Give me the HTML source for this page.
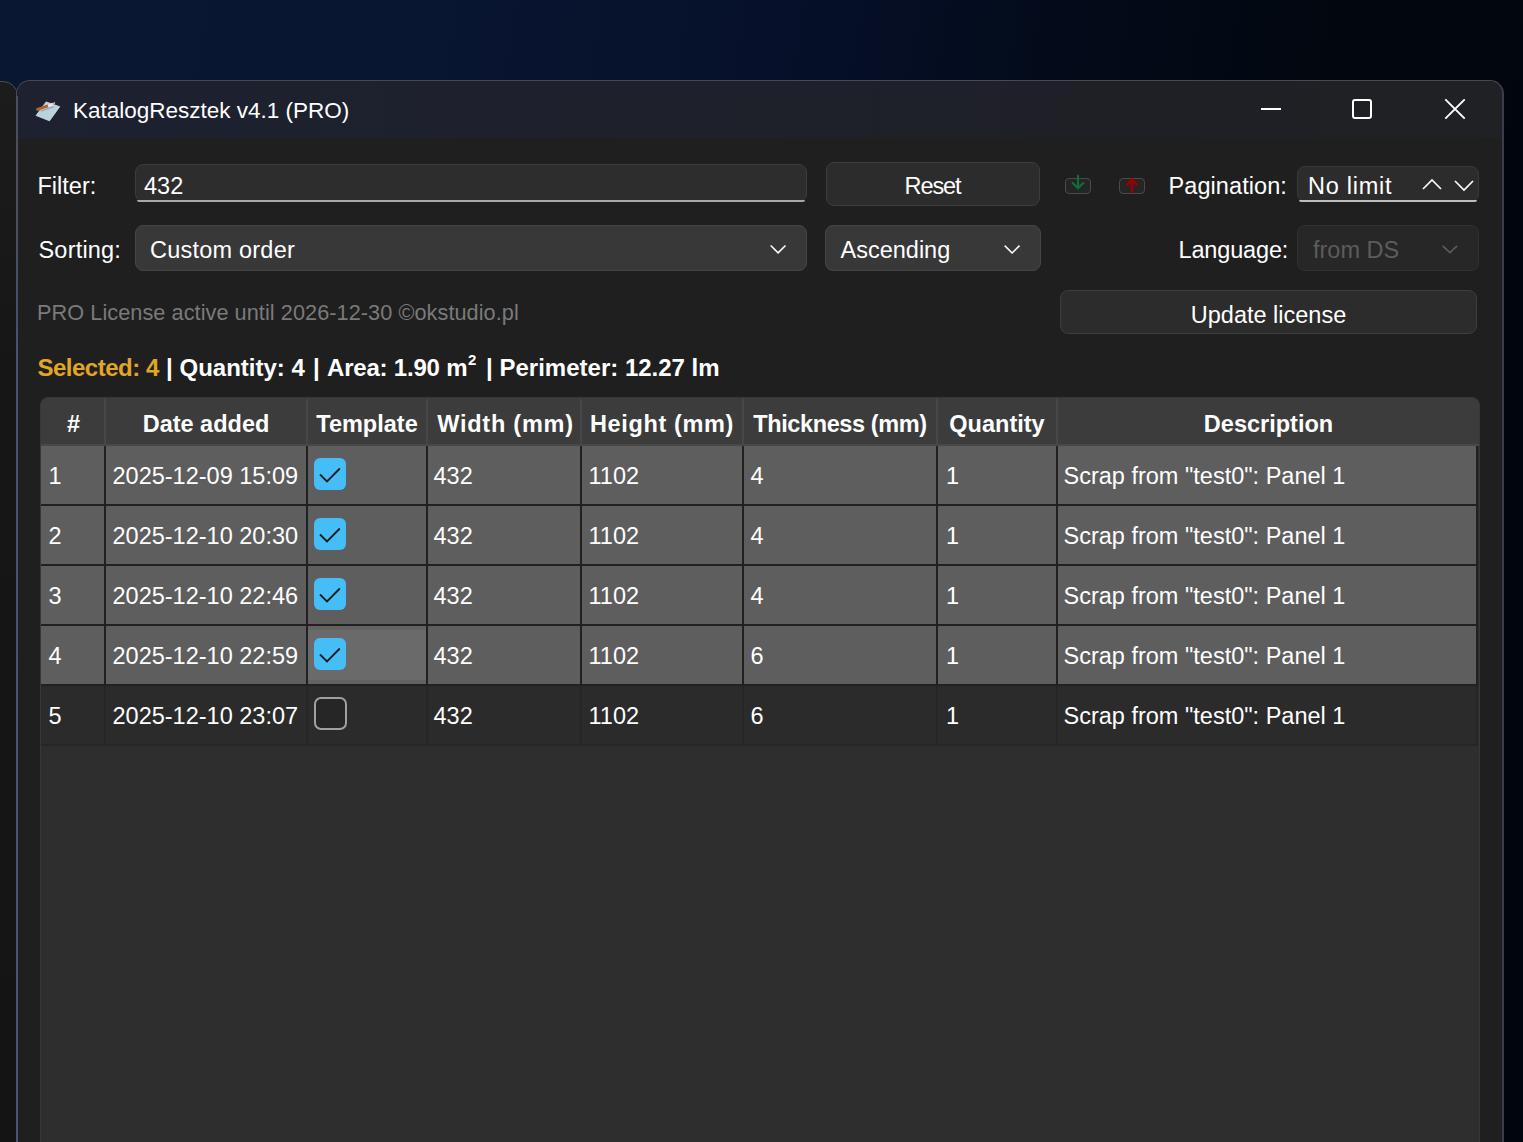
<!DOCTYPE html>
<html><head><meta charset="utf-8">
<style>
*{margin:0;padding:0;box-sizing:border-box}
html,body{width:1523px;height:1142px;overflow:hidden}
body{position:relative;font-family:"Liberation Sans",sans-serif;color:#fff;
background:linear-gradient(100deg,#0a1733 0%,#091631 25%,#06102a 45%,#030b1a 62%,#02070f 78%,#01050c 100%);}
.a{position:absolute}
.t{position:absolute;white-space:nowrap;font-size:23.5px;line-height:28px}
.b{font-weight:bold}
#left{left:-20px;top:81px;width:37.5px;height:1100px;background:linear-gradient(#1c1c1c,#161616 300px,#141414);border:1.5px solid #4a4f58;border-radius:15px}
#win{left:16px;top:80px;width:1488px;height:1100px;border:1.5px solid #444955;border-right:2px solid #3a3e4a;border-radius:14px;background:#1f1f1f;overflow:hidden}
#title{left:0;top:0;width:100%;height:56.5px;background:linear-gradient(90deg,#1d2130 0%,#1e212c 40%,#1f2026 75%,#202124 100%)}
.box{position:absolute;border-radius:8px}
.chev{position:absolute}
.grid{position:absolute}
</style></head><body>
<div id="left" class="a"></div>
<div id="win" class="a">
  <div id="title" class="a"></div>
</div>
<div class="a" style="left:16px;top:96px;width:1.6px;height:1046px;background:linear-gradient(#4a4f58 0px,#4a4f5c 124px,#485075 264px,#4a527c 604px,#4a527c)"></div>

<!-- title content -->
<svg class="a" style="left:32px;top:98px" width="32" height="26" viewBox="0 0 32 26">
  <polygon points="4.1,17.5 14.1,3.9 27.7,8.7 17.5,22.8" fill="#bad2de" stroke="#cde3ee" stroke-width="0.8" stroke-linejoin="round"/>
  <line x1="8.7" y1="13.2" x2="21.9" y2="8.6" stroke="#98a6b0" stroke-width="1.3"/>
  <line x1="5.4" y1="11.3" x2="16" y2="7.9" stroke="#b3622c" stroke-width="2.8" stroke-linecap="round"/>
  <line x1="16" y1="7.9" x2="21.3" y2="6.1" stroke="#e8e8ee" stroke-width="2.6"/>
  <line x1="21.3" y1="6.1" x2="22.3" y2="5" stroke="#c9bb9f" stroke-width="1.8" stroke-linecap="round"/>
</svg>
<div class="t" style="left:73px;top:97px;font-size:22.5px">KatalogResztek v4.1 (PRO)</div>
<!-- window controls -->
<div class="a" style="left:1261px;top:108px;width:20px;height:2px;background:#fff"></div>
<div class="a" style="left:1352px;top:99px;width:20px;height:20px;border:2px solid #fff;border-radius:3px"></div>
<svg class="a" style="left:1443px;top:97px" width="24" height="24" viewBox="0 0 24 24"><path d="M2.3 2.3L21.7 21.7M21.7 2.3L2.3 21.7" stroke="#fff" stroke-width="1.9"/></svg>

<!-- row 1 -->
<div class="t" style="left:37.5px;top:172px">Filter:</div>
<div class="box" style="left:135px;top:164px;width:672px;height:38px;background:#2d2d2d;border:1px solid #3c3c3c"></div>
<div class="a" style="left:137px;top:200px;width:668px;height:2px;border-radius:0 0 6px 6px;background:#a8a8a8"></div>
<div class="t" style="left:144px;top:172px">432</div>
<div class="box" style="left:826px;top:162px;width:214px;height:44px;background:#2c2c2c;border:1px solid #3d3d3d"></div>
<div class="t" style="left:825.5px;top:172px;width:214px;text-align:center;letter-spacing:-1.1px">Reset</div>

<!-- import/export icons -->
<div class="a" style="left:1065px;top:178px;width:26px;height:16px;border:1.8px solid #4a4a4a;background:#252525;border-radius:4px"></div>
<svg class="a" style="left:1070px;top:174px" width="16" height="16" viewBox="0 0 16 16"><path d="M8 1.5V14M2.7 9L8 14.3L13.3 9" stroke="#0e6e3b" stroke-width="2.2" stroke-linecap="round" fill="none"/></svg>
<div class="a" style="left:1119px;top:178px;width:26px;height:16px;border:1.8px solid #4a4a4a;background:#252525;border-radius:4px"></div>
<svg class="a" style="left:1124px;top:177px" width="16" height="17" viewBox="0 0 16 17"><path d="M8 15.3V3M2.9 7.8L8 2.6L13.1 7.8" stroke="#990000" stroke-width="2.6" stroke-linecap="round" fill="none"/></svg>

<div class="t" style="left:1168.5px;top:172px;letter-spacing:0.08px">Pagination:</div>
<div class="box" style="left:1297px;top:166px;width:182px;height:36px;background:#2c2c2c;border:1px solid #393939"></div>
<div class="a" style="left:1299px;top:200px;width:178px;height:2px;border-radius:0 0 6px 6px;background:#bdbdbd"></div>
<div class="t" style="left:1308px;top:172px;letter-spacing:0.75px">No limit</div>
<svg class="a" style="left:1422px;top:178px" width="20" height="13" viewBox="0 0 20 13"><path d="M1 11L10 2L19 11" stroke="#fff" stroke-width="1.6" fill="none"/></svg>
<svg class="a" style="left:1454px;top:179px" width="20" height="13" viewBox="0 0 20 13"><path d="M1 2L10 11L19 2" stroke="#fff" stroke-width="1.6" fill="none"/></svg>

<!-- row 2 -->
<div class="t" style="left:38.5px;top:236px;letter-spacing:0.2px">Sorting:</div>
<div class="box" style="left:135px;top:225px;width:672px;height:46px;background:#383838;border:1px solid #454545"></div>
<div class="t" style="left:150px;top:236px;letter-spacing:0.22px">Custom order</div>
<svg class="a" style="left:769px;top:243px" width="19" height="13" viewBox="0 0 19 13"><path d="M1.7 2.5L9.1 9.9L16.5 2.5" stroke="#fff" stroke-width="1.55" fill="none"/></svg>
<div class="box" style="left:825px;top:225px;width:216px;height:46px;background:#383838;border:1px solid #454545"></div>
<div class="t" style="left:840.5px;top:236px">Ascending</div>
<svg class="a" style="left:1003px;top:243px" width="19" height="13" viewBox="0 0 19 13"><path d="M1.7 2.6L9.1 10L16.5 2.6" stroke="#fff" stroke-width="1.55" fill="none"/></svg>

<div class="t" style="left:1178.5px;top:236px;letter-spacing:-0.15px">Language:</div>
<div class="box" style="left:1297px;top:225px;width:182px;height:46px;background:#272727;border:1px solid #313131"></div>
<div class="t" style="left:1313px;top:236px;color:#5c5c5c">from DS</div>
<svg class="a" style="left:1441px;top:243px" width="18" height="12" viewBox="0 0 18 12"><path d="M1.7 2.9L8.9 9.6L16.1 2.9" stroke="#5c5c5c" stroke-width="1.6" fill="none"/></svg>

<!-- row 3 -->
<div class="t" style="left:37px;top:299px;font-size:21.7px;color:#7a7a7a;letter-spacing:0.06px">PRO License active until 2026-12-30 ©okstudio.pl</div>
<div class="box" style="left:1060px;top:290px;width:417px;height:44px;background:#2c2c2c;border:1px solid #3d3d3d"></div>
<div class="t" style="left:1060px;top:301px;width:417px;text-align:center">Update license</div>

<!-- stats -->
<div class="t b" style="left:37.5px;top:354px;font-size:24px;color:#e0a628;letter-spacing:-0.5px">Selected: 4</div>
<div class="t b" style="left:166px;top:354px;font-size:24px">|</div>
<div class="t b" style="left:179.5px;top:354px;font-size:24px">Quantity: 4</div>
<div class="t b" style="left:313px;top:354px;font-size:24px">|</div>
<div class="t b" style="left:327px;top:354px;font-size:24px;letter-spacing:-0.2px">Area: 1.90 m</div>
<div class="t b" style="left:468px;top:346px;font-size:15px;font-weight:bold">2</div>
<div class="t b" style="left:486px;top:354px;font-size:24px">|</div>
<div class="t b" style="left:499.5px;top:354px;font-size:24px;letter-spacing:0px">Perimeter: 12.27 lm</div>

<!-- grid -->
<div class="grid" style="left:40px;top:397px;width:1440px;height:760px;background:#2e2e2e;border:1px solid #383838;border-radius:8px;overflow:hidden" id="grid"></div>
<div id="cells">
<div class="a" style="left:41px;top:398px;width:1438px;height:47px;background:#3c3c3c;border-radius:7px 7px 0 0"></div>
<div class="a" style="left:41px;top:444px;width:1438px;height:2px;background:#484848"></div>
<div class="a" style="left:104px;top:399px;width:2px;height:45px;background:#474747"></div>
<div class="a" style="left:306px;top:399px;width:2px;height:45px;background:#474747"></div>
<div class="a" style="left:426px;top:399px;width:2px;height:45px;background:#474747"></div>
<div class="a" style="left:580px;top:399px;width:2px;height:45px;background:#474747"></div>
<div class="a" style="left:742px;top:399px;width:2px;height:45px;background:#474747"></div>
<div class="a" style="left:936px;top:399px;width:2px;height:45px;background:#474747"></div>
<div class="a" style="left:1056px;top:399px;width:2px;height:45px;background:#474747"></div>
<div class="t b" style="left:41px;top:410px;width:63px;text-align:center;margin-left:1px">#</div>
<div class="t b" style="left:106px;top:410px;width:200px;text-align:center;">Date added</div>
<div class="t b" style="left:308px;top:410px;width:118px;text-align:center;">Template</div>
<div class="t b" style="left:428px;top:410px;width:152px;text-align:center;letter-spacing:0.75px;margin-left:1.5px">Width (mm)</div>
<div class="t b" style="left:582px;top:410px;width:160px;text-align:center;letter-spacing:0.65px">Height (mm)</div>
<div class="t b" style="left:744px;top:410px;width:192px;text-align:center;letter-spacing:-0.38px">Thickness (mm)</div>
<div class="t b" style="left:938px;top:410px;width:118px;text-align:center;">Quantity</div>
<div class="t b" style="left:1058px;top:410px;width:421px;text-align:center;">Description</div>
<div class="a" style="left:41px;top:446px;width:1437px;height:60px;background:#5e5e5e"></div>
<div class="a" style="left:41px;top:504px;width:1437px;height:2px;background:#212121"></div>
<div class="a" style="left:104px;top:446px;width:2px;height:60px;background:#212121"></div>
<div class="a" style="left:306px;top:446px;width:2px;height:60px;background:#212121"></div>
<div class="a" style="left:426px;top:446px;width:2px;height:60px;background:#212121"></div>
<div class="a" style="left:580px;top:446px;width:2px;height:60px;background:#212121"></div>
<div class="a" style="left:742px;top:446px;width:2px;height:60px;background:#212121"></div>
<div class="a" style="left:936px;top:446px;width:2px;height:60px;background:#212121"></div>
<div class="a" style="left:1056px;top:446px;width:2px;height:60px;background:#212121"></div>
<div class="a" style="left:1476px;top:446px;width:2px;height:60px;background:#212121"></div>
<div class="t" style="left:48.5px;top:462px">1</div>
<div class="t" style="left:112.5px;top:462px">2025-12-09 15:09</div>
<div class="a" style="left:314px;top:458px;width:32px;height:32px;border-radius:6px;background:#45bdf6"></div>
<svg class="a" style="left:314px;top:458px" width="32" height="32" viewBox="0 0 32 32"><path d="M6 16.5L13 23.5L25.8 10.5" stroke="#1a1a1a" stroke-width="1.8" fill="none"/></svg>
<div class="t" style="left:433.5px;top:462px">432</div>
<div class="t" style="left:588.5px;top:462px">1102</div>
<div class="t" style="left:750.5px;top:462px">4</div>
<div class="t" style="left:946px;top:462px">1</div>
<div class="t" style="left:1063.5px;top:462px">Scrap from "test0": Panel 1</div>
<div class="a" style="left:41px;top:506px;width:1437px;height:60px;background:#5e5e5e"></div>
<div class="a" style="left:41px;top:564px;width:1437px;height:2px;background:#212121"></div>
<div class="a" style="left:104px;top:506px;width:2px;height:60px;background:#212121"></div>
<div class="a" style="left:306px;top:506px;width:2px;height:60px;background:#212121"></div>
<div class="a" style="left:426px;top:506px;width:2px;height:60px;background:#212121"></div>
<div class="a" style="left:580px;top:506px;width:2px;height:60px;background:#212121"></div>
<div class="a" style="left:742px;top:506px;width:2px;height:60px;background:#212121"></div>
<div class="a" style="left:936px;top:506px;width:2px;height:60px;background:#212121"></div>
<div class="a" style="left:1056px;top:506px;width:2px;height:60px;background:#212121"></div>
<div class="a" style="left:1476px;top:506px;width:2px;height:60px;background:#212121"></div>
<div class="t" style="left:48.5px;top:522px">2</div>
<div class="t" style="left:112.5px;top:522px">2025-12-10 20:30</div>
<div class="a" style="left:314px;top:518px;width:32px;height:32px;border-radius:6px;background:#45bdf6"></div>
<svg class="a" style="left:314px;top:518px" width="32" height="32" viewBox="0 0 32 32"><path d="M6 16.5L13 23.5L25.8 10.5" stroke="#1a1a1a" stroke-width="1.8" fill="none"/></svg>
<div class="t" style="left:433.5px;top:522px">432</div>
<div class="t" style="left:588.5px;top:522px">1102</div>
<div class="t" style="left:750.5px;top:522px">4</div>
<div class="t" style="left:946px;top:522px">1</div>
<div class="t" style="left:1063.5px;top:522px">Scrap from "test0": Panel 1</div>
<div class="a" style="left:41px;top:566px;width:1437px;height:60px;background:#5e5e5e"></div>
<div class="a" style="left:41px;top:624px;width:1437px;height:2px;background:#212121"></div>
<div class="a" style="left:104px;top:566px;width:2px;height:60px;background:#212121"></div>
<div class="a" style="left:306px;top:566px;width:2px;height:60px;background:#212121"></div>
<div class="a" style="left:426px;top:566px;width:2px;height:60px;background:#212121"></div>
<div class="a" style="left:580px;top:566px;width:2px;height:60px;background:#212121"></div>
<div class="a" style="left:742px;top:566px;width:2px;height:60px;background:#212121"></div>
<div class="a" style="left:936px;top:566px;width:2px;height:60px;background:#212121"></div>
<div class="a" style="left:1056px;top:566px;width:2px;height:60px;background:#212121"></div>
<div class="a" style="left:1476px;top:566px;width:2px;height:60px;background:#212121"></div>
<div class="t" style="left:48.5px;top:582px">3</div>
<div class="t" style="left:112.5px;top:582px">2025-12-10 22:46</div>
<div class="a" style="left:314px;top:578px;width:32px;height:32px;border-radius:6px;background:#45bdf6"></div>
<svg class="a" style="left:314px;top:578px" width="32" height="32" viewBox="0 0 32 32"><path d="M6 16.5L13 23.5L25.8 10.5" stroke="#1a1a1a" stroke-width="1.8" fill="none"/></svg>
<div class="t" style="left:433.5px;top:582px">432</div>
<div class="t" style="left:588.5px;top:582px">1102</div>
<div class="t" style="left:750.5px;top:582px">4</div>
<div class="t" style="left:946px;top:582px">1</div>
<div class="t" style="left:1063.5px;top:582px">Scrap from "test0": Panel 1</div>
<div class="a" style="left:41px;top:626px;width:1437px;height:60px;background:#5e5e5e"></div>
<div class="a" style="left:41px;top:684px;width:1437px;height:2px;background:#212121"></div>
<div class="a" style="left:104px;top:626px;width:2px;height:60px;background:#212121"></div>
<div class="a" style="left:306px;top:626px;width:2px;height:60px;background:#212121"></div>
<div class="a" style="left:426px;top:626px;width:2px;height:60px;background:#212121"></div>
<div class="a" style="left:580px;top:626px;width:2px;height:60px;background:#212121"></div>
<div class="a" style="left:742px;top:626px;width:2px;height:60px;background:#212121"></div>
<div class="a" style="left:936px;top:626px;width:2px;height:60px;background:#212121"></div>
<div class="a" style="left:1056px;top:626px;width:2px;height:60px;background:#212121"></div>
<div class="a" style="left:1476px;top:626px;width:2px;height:60px;background:#212121"></div>
<div class="a" style="left:308px;top:626px;width:118px;height:58px;background:#626262"></div>
<div class="a" style="left:308px;top:630px;width:118px;height:50px;background:#6a6a6a"></div>
<div class="t" style="left:48.5px;top:642px">4</div>
<div class="t" style="left:112.5px;top:642px">2025-12-10 22:59</div>
<div class="a" style="left:314px;top:638px;width:32px;height:32px;border-radius:6px;background:#45bdf6"></div>
<svg class="a" style="left:314px;top:638px" width="32" height="32" viewBox="0 0 32 32"><path d="M6 16.5L13 23.5L25.8 10.5" stroke="#1a1a1a" stroke-width="1.8" fill="none"/></svg>
<div class="t" style="left:433.5px;top:642px">432</div>
<div class="t" style="left:588.5px;top:642px">1102</div>
<div class="t" style="left:750.5px;top:642px">6</div>
<div class="t" style="left:946px;top:642px">1</div>
<div class="t" style="left:1063.5px;top:642px">Scrap from "test0": Panel 1</div>
<div class="a" style="left:41px;top:686px;width:1437px;height:60px;background:#2b2b2b"></div>
<div class="a" style="left:41px;top:744px;width:1437px;height:2px;background:#262626"></div>
<div class="a" style="left:104px;top:686px;width:2px;height:60px;background:#262626"></div>
<div class="a" style="left:306px;top:686px;width:2px;height:60px;background:#262626"></div>
<div class="a" style="left:426px;top:686px;width:2px;height:60px;background:#262626"></div>
<div class="a" style="left:580px;top:686px;width:2px;height:60px;background:#262626"></div>
<div class="a" style="left:742px;top:686px;width:2px;height:60px;background:#262626"></div>
<div class="a" style="left:936px;top:686px;width:2px;height:60px;background:#262626"></div>
<div class="a" style="left:1056px;top:686px;width:2px;height:60px;background:#262626"></div>
<div class="a" style="left:1476px;top:686px;width:2px;height:60px;background:#262626"></div>
<div class="t" style="left:48.5px;top:702px">5</div>
<div class="t" style="left:112.5px;top:702px">2025-12-10 23:07</div>
<div class="a" style="left:313.5px;top:697px;width:33px;height:33px;border-radius:7px;background:#262626;border:2px solid #a0a0a0"></div>
<div class="t" style="left:433.5px;top:702px">432</div>
<div class="t" style="left:588.5px;top:702px">1102</div>
<div class="t" style="left:750.5px;top:702px">6</div>
<div class="t" style="left:946px;top:702px">1</div>
<div class="t" style="left:1063.5px;top:702px">Scrap from "test0": Panel 1</div>
</div>

</body></html>
